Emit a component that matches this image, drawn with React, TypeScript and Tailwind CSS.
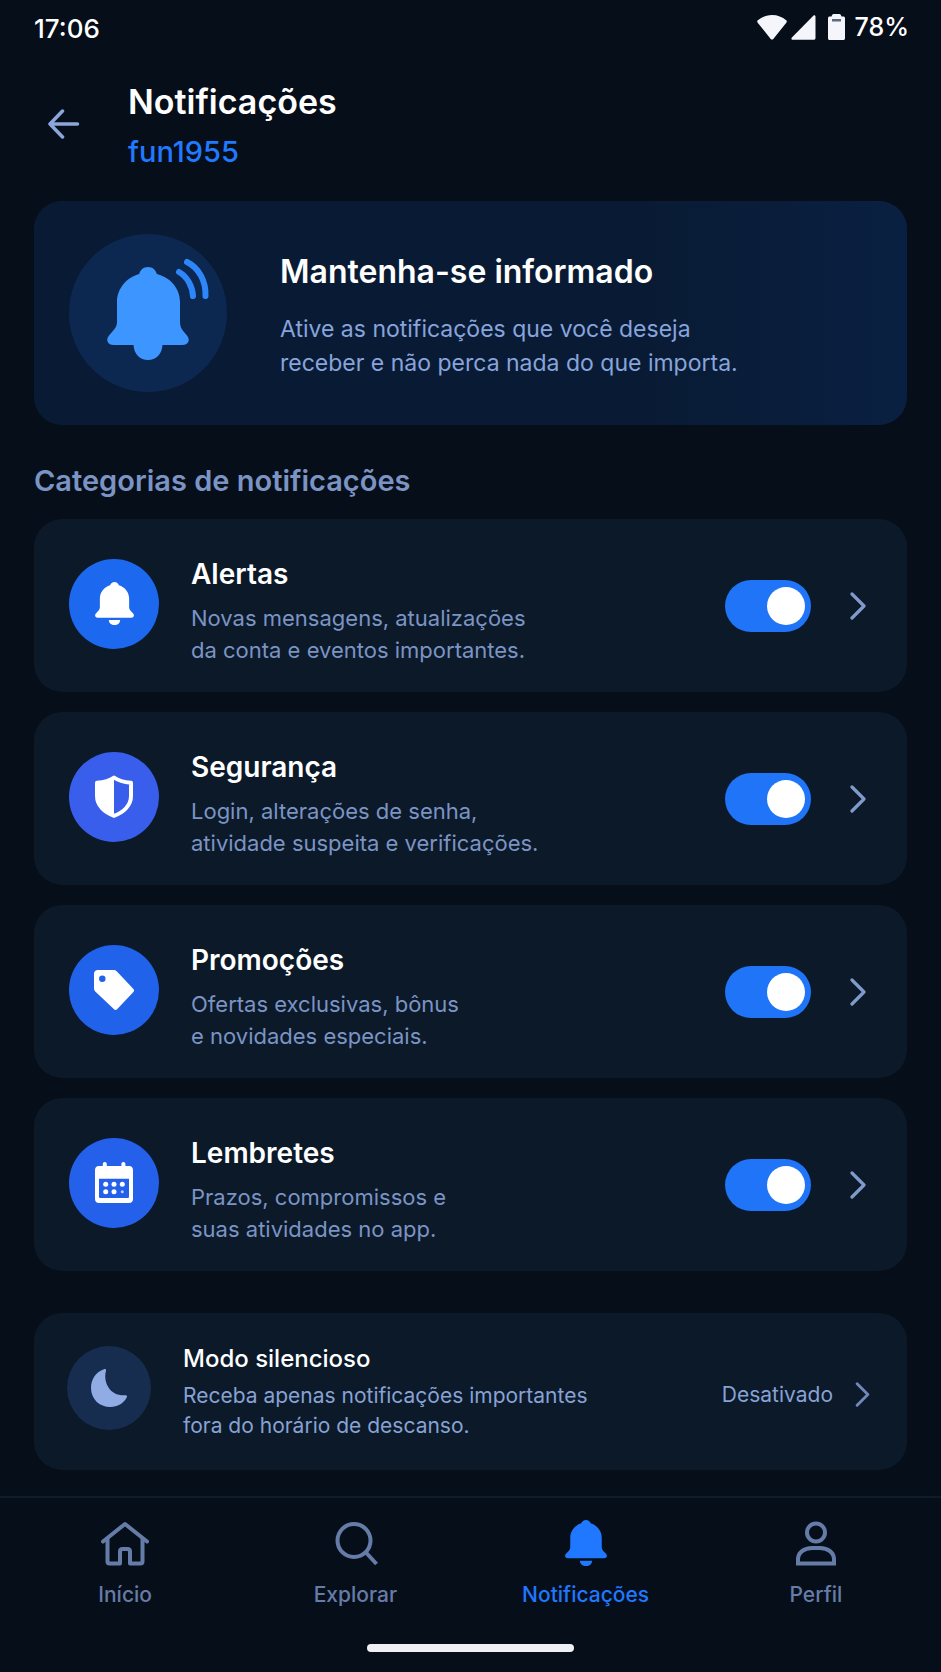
import { useState } from 'react';
import type { ReactNode } from 'react';

function BellIcon({ className }: { className?: string }) {
  return (
    <svg viewBox="0 0 40 44" fill="currentColor" className={className} aria-hidden="true">
      <path d="M20 0c2.200 0 3.900 1.300 4.500 3.300C30.600 5.200 35 10.500 35 17v8.500c0 2 .8 3.300 2.200 4.800l1.900 2c1.700 1.900.6 4.200-1.900 4.200H2.800c-2.500 0-3.600-2.300-1.900-4.200l1.900-2C4.200 28.800 5 27.500 5 25.500V17C5 10.500 9.400 5.200 15.500 3.300 16.100 1.300 17.800 0 20 0z" />
      <path d="M14.200 38.800h11.600c0 3-2.500 5.200-5.800 5.200s-5.800-2.200-5.800-5.200z" />
    </svg>
  );
}

function HeroBell() {
  return (
    <svg viewBox="0 0 158 158" className="size-full" aria-hidden="true">
      <path
        fill="#3d96ff"
        d="M79 33c4.500 0 7.800 2.800 8.800 7C101.500 43.500 111 54.500 111 68v20c0 4.500 1.300 7 4 10l3 3.500c3.800 4.500 1 9.500-4.500 9.500H93.500c-.5 9-6.500 15-14.500 15s-14-6-14.500-15H44.500c-5.500 0-8.300-5-4.500-9.500l3-3.500c2.700-3 5-5.500 5-10V68c0-13.500 9.500-24.500 22.200-28 1-4.200 4.300-7 8.800-7z"
      />
      <g fill="none" stroke="#2e86fb" strokeWidth="6" strokeLinecap="round">
        <path d="M110 38c8 4.500 13.500 14 14 24" />
        <path d="M118 28c12 6 19 19 18.500 34" />
      </g>
    </svg>
  );
}

function ShieldIcon() {
  return (
    <svg viewBox="0 0 38 43" className="h-[43px] w-[38px]" aria-hidden="true">
      <path
        fill="none"
        stroke="#fff"
        strokeWidth="4"
        strokeLinejoin="round"
        d="M19 2.500C14.500 5.800 9 7.200 2 7.800V21c0 9.500 7.500 16.500 17 19.800C28.500 37.500 36 30.500 36 21V7.800C29 7.200 23.500 5.800 19 2.500z"
      />
      <path fill="#fff" d="M19 2.500C14.500 5.800 9 7.200 2 7.800V21c0 9.500 7.500 16.500 17 19.800z" />
    </svg>
  );
}

function TagIcon() {
  return (
    <svg viewBox="0 0 40 40" className="size-10" fill="#fff" aria-hidden="true">
      <path
        fillRule="evenodd"
        d="M4 0h15.500c1.300 0 2.300.4 3.200 1.300l16.500 17.500c1.100 1.200 1.100 2.300 0 3.400L23.300 39.100c-1.100 1.200-2.400 1.200-3.500 0L1.500 21.700C.5 20.700 0 19.700 0 18.300V4c0-2.500 1.500-4 4-4zm4.300 5.500a3.200 3.200 0 1 0 0 6.400 3.200 3.200 0 0 0 0-6.400z"
      />
    </svg>
  );
}

function CalendarIcon() {
  return (
    <svg viewBox="0 0 38 41" className="h-[41px] w-[38px]" fill="#fff" aria-hidden="true">
      <path
        fillRule="evenodd"
        d="M9.800 0c1.200 0 2 .8 2 2v2h14.600V2c0-1.200.8-2 2-2s2 .8 2 2v2H34c2.500 0 4 1.500 4 4v29c0 2.500-1.500 4-4 4H4c-2.500 0-4-1.500-4-4V8c0-2.500 1.500-4 4-4h3.800V2c0-1.200.8-2 2-2zM4 16.700v17.800c0 1 .5 1.500 1.500 1.500h27c1 0 1.500-.5 1.500-1.500V16.700z"
      />
      <circle cx="10.700" cy="22.300" r="2.500" />
      <circle cx="19" cy="22.300" r="2.500" />
      <circle cx="27.300" cy="22.300" r="2.500" />
      <circle cx="10.700" cy="29.800" r="2.500" />
      <circle cx="19" cy="29.800" r="2.500" />
      <circle cx="27.300" cy="29.800" r="1.500" opacity="0.7" />
    </svg>
  );
}

function Chevron({ className }: { className?: string }) {
  return (
    <svg viewBox="0 0 16 28" className={className} fill="none" stroke="currentColor" strokeWidth="3.200" strokeLinecap="round" strokeLinejoin="round" aria-hidden="true">
      <path d="M2 2l12 12L2 26" />
    </svg>
  );
}

const navIcon = { viewBox: '0 0 48 48', fill: 'none', stroke: 'currentColor', strokeWidth: 4, className: 'size-12' };

const categories: { id: string; title: string; lines: [string, string]; color: string; icon: ReactNode }[] = [
  { id: 'alertas', title: 'Alertas', lines: ['Novas mensagens, atualizações', 'da conta e eventos importantes.'], color: 'bg-[#1c68ee]', icon: <BellIcon className="h-[43px] w-[39px]" /> },
  { id: 'seguranca', title: 'Segurança', lines: ['Login, alterações de senha,', 'atividade suspeita e verificações.'], color: 'bg-[#395eec]', icon: <ShieldIcon /> },
  { id: 'promocoes', title: 'Promoções', lines: ['Ofertas exclusivas, bônus', 'e novidades especiais.'], color: 'bg-[#2162ea]', icon: <TagIcon /> },
  { id: 'lembretes', title: 'Lembretes', lines: ['Prazos, compromissos e', 'suas atividades no app.'], color: 'bg-[#2560ea]', icon: <CalendarIcon /> },
];

const tabs: { label: string; active?: boolean; icon: ReactNode }[] = [
  {
    label: 'Início',
    icon: (
      <svg {...navIcon} strokeLinecap="round" strokeLinejoin="round">
        <path d="M2 22.500L24 5l22 17.500" />
        <path d="M6.500 20v22.500q0 2 2 2h10.500V32.500q0-2.500 2.500-2.500h5q2.500 0 2.500 2.500v12h10.500q2 0 2-2V20" />
      </svg>
    ),
  },
  {
    label: 'Explorar',
    icon: (
      <svg {...navIcon}>
        <circle cx="23" cy="21.500" r="16.500" />
        <path d="M34.500 33l11 12" />
      </svg>
    ),
  },
  { label: 'Notificações', active: true, icon: <BellIcon className="h-12 w-[42px]" /> },
  {
    label: 'Perfil',
    icon: (
      <svg {...navIcon}>
        <circle cx="24" cy="13.500" r="9" />
        <path d="M6 44.500V40.500c0-7 6-11.500 14-11.500h8c8 0 14 4.500 14 11.500v4z" />
      </svg>
    ),
  },
];

export default function App() {
  const [enabled, setEnabled] = useState<Record<string, boolean>>({
    alertas: true,
    seguranca: true,
    promocoes: true,
    lembretes: true,
  });

  return (
    <div className="flex min-h-screen flex-col bg-[#060e19] font-['Inter',sans-serif] text-white">
      {/* Status bar */}
      <div className="flex h-14 items-center justify-between pr-8 pl-[34px] font-medium">
        <span className="text-[26px]">17:06</span>
        <div className="flex items-center">
          <div className="mr-2.5 mb-0.5 flex items-center gap-1">
            <svg viewBox="0 0 30 25" className="h-[25px] w-[30px]" fill="#f4f6fb" aria-hidden="true">
              <path d="M15 0c5.600 0 10.400 2 14.200 5.300.8.700.8 1.600.1 2.400L16.300 23.900c-.8.900-1.800.9-2.600 0L.7 7.700C0 6.900 0 6 .8 5.300 4.600 2 9.400 0 15 0z" />
            </svg>
            <svg viewBox="0 0 25 25" className="mr-2 size-[25px]" fill="#f4f6fb" aria-hidden="true">
              <path d="M22.300.8c1-.9 2.200-.4 2.200 1V23c0 1-.7 1.800-1.700 1.800H1.800C.4 24.800 0 23.500.9 22.500z" />
            </svg>
            <svg viewBox="0 0 17 26" className="h-[26px] w-[17px]" aria-hidden="true">
              <path fill="#f4f6fb" d="M5.500 0h6c1 0 1.500 1 2 2.500h1.800c1 0 1.700.7 1.700 1.700v20c0 1.100-.7 1.800-1.700 1.800H1.700C.7 26 0 25.300 0 24.200v-20c0-1 .7-1.700 1.700-1.700h1.800C4 1 4.500 0 5.500 0z" />
              <path fill="#5b6b80" d="M4 5h9v2.500H4z" />
            </svg>
          </div>
          <span className="text-[25px]">78%</span>
        </div>
      </div>

      {/* Header */}
      <header className="flex items-center gap-12 px-12 pt-5">
        <button type="button" aria-label="Voltar" className="mb-1 text-[#8ca6dc]">
          <svg viewBox="0 0 32 30" className="h-[30px] w-8" fill="none" stroke="currentColor" strokeWidth="3.500" strokeLinecap="round" strokeLinejoin="round" aria-hidden="true">
            <path d="M14.500 2L2 15l12.500 13M2 15h27.500" />
          </svg>
        </button>
        <div>
          <h1 className="text-[34px] leading-[52px] font-semibold">Notificações</h1>
          <p className="text-[29px] leading-[48px] font-medium text-[#2179ff]">fun1955</p>
        </div>
      </header>

      <main className="flex-1 px-[34px] pt-[25px]">
        <section className="flex items-center gap-[53px] rounded-[28px] bg-linear-to-r from-[#091b34] from-70% to-[#0a2042] px-[35px] py-[33px]">
          <div className="size-[158px] shrink-0 rounded-full bg-[#0d2850]">
            <HeroBell />
          </div>
          <div className="pt-0.5">
            <h2 className="text-[32px] leading-[48px] font-semibold">Mantenha-se informado</h2>
            <p className="mt-4 text-[23px] leading-[34px] text-[#88a4dc]">
              Ative as notificações que você deseja
              <br />
              receber e não perca nada do que importa.
            </p>
          </div>
        </section>

        <h2 className="pt-[33px] pb-[15px] text-[29px] leading-[46px] font-semibold text-[#7b94c4]">Categorias de notificações</h2>

        <ul className="flex flex-col gap-5">
          {categories.map(cat => (
            <li key={cat.id} className="flex h-[173px] items-center rounded-[28px] bg-[#0b1929] px-[35px]">
              <div className={`mb-1 flex size-[90px] shrink-0 items-center justify-center rounded-full ${cat.color}`}>{cat.icon}</div>
              <div className="ml-8 flex-1 pt-2">
                <label htmlFor={cat.id} className="block text-[28px] leading-10 font-semibold">{cat.title}</label>
                <p className="mt-2 text-[22px] leading-8 text-[#7b94c4]">
                  {cat.lines[0]}
                  <br />
                  {cat.lines[1]}
                </p>
              </div>
              <input
                id={cat.id}
                type="checkbox"
                role="switch"
                checked={enabled[cat.id]}
                onChange={e => setEnabled({ ...enabled, [cat.id]: e.target.checked })}
                className="h-[52px] w-[86px] shrink-0 cursor-pointer appearance-none rounded-full bg-[#24344e] p-[7px] before:block before:size-[38px] before:rounded-full before:bg-white checked:bg-[#1f74f8] checked:before:translate-x-[35px]"
              />
              <button type="button" aria-label={`Abrir ${cat.title}`} className="ml-[39px] pr-1.5 text-[#8199cb]">
                <Chevron className="h-7 w-4" />
              </button>
            </li>
          ))}
        </ul>

        <button type="button" className="mt-[42px] flex h-[157px] w-full items-center rounded-[28px] bg-[#0b1929] px-[33px] text-left">
          <span className="mb-2 flex size-[84px] shrink-0 items-center justify-center rounded-full bg-[#172d50]">
            <svg viewBox="0 0 36 38" className="h-[38px] w-9" fill="#91ace4" aria-hidden="true">
              <path d="M13 .2c1.200-.4 2.300.3 2 1.500-1.400 5.200-1 11 2.200 16.300 3.500 6 9.500 8.700 17 8.300 1.500-.1 2.200.9 1.500 2.200C32.300 34.500 26.500 38 19.500 38 8.300 38 0 30 0 19 0 10 5 3 13 .2z" />
            </svg>
          </span>
          <span className="ml-8 flex-1">
            <span className="block text-2xl font-medium">Modo silencioso</span>
            <span className="mt-1.5 block text-[21px] leading-[30px] text-[#88a2d4]">
              Receba apenas notificações importantes
              <br />
              fora do horário de descanso.
            </span>
          </span>
          <span className="flex items-center gap-[22px] pt-1.5 pr-1 text-[21px] text-[#88a2d4]">
            Desativado
            <Chevron className="h-[25px] w-[15px] text-[#6f88b8]" />
          </span>
        </button>
      </main>

      {/* Bottom navigation */}
      <nav className="mt-6 border-t-2 border-[#0e1b2b] px-2.5 pt-[21px] pb-5">
        <ul className="grid grid-cols-4">
          {tabs.map(tab => (
            <li key={tab.label}>
              <a
                href="#"
                aria-current={tab.active ? 'page' : undefined}
                className={`flex flex-col items-center gap-3 text-[21px] leading-8 font-medium ${tab.active ? 'text-[#1f78ff]' : 'text-[#667ca8]'}`}
              >
                {tab.icon}
                {tab.label}
              </a>
            </li>
          ))}
        </ul>
        <div className="mx-auto mt-[33px] h-2 w-[207px] rounded-full bg-[#eef0f4]" />
      </nav>
    </div>
  );
}
